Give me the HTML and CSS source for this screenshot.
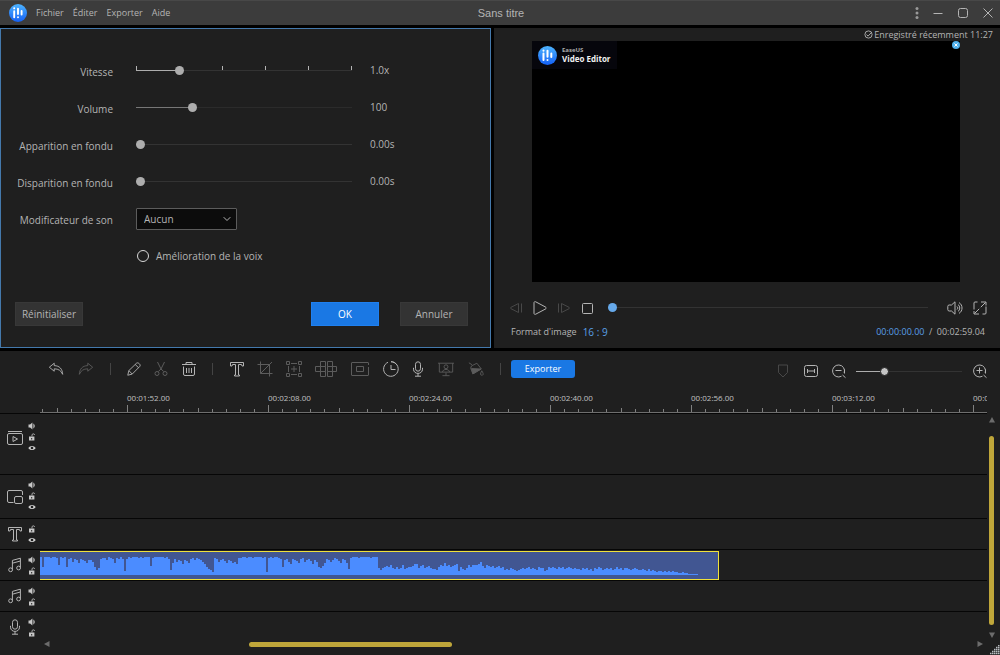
FILE: index.html
```html
<!DOCTYPE html>
<html lang="fr">
<head>
    <meta charset="UTF-8">
    <meta name="viewport" content="width=device-width, initial-scale=1.0">
    <title>Sans titre - Video Editor</title>
    <link rel="stylesheet" href="styles.css">
</head>
<body>
    <!-- Shared icons -->
    <svg class="sprite" aria-hidden="true">
        <defs>
            <linearGradient id="logo-fill" x1="0" y1="0" x2="0" y2="1">
                <stop offset="0" stop-color="#4db4ff"/>
                <stop offset="1" stop-color="#1460f5"/>
            </linearGradient>
        </defs>
        <symbol id="logo" viewBox="0 0 18 18">
            <circle cx="9" cy="9" r="9" fill="url(#logo-fill)"/>
            <g stroke="#fff" stroke-linecap="round" stroke-width="1.9">
                <path d="M5.2 7.200v6M9 4.600v5.500M12.600 7v3.500"/>
                <path d="M5.200 4.300v.1M9 13.200v.1"/>
            </g>
        </symbol>
        <symbol id="speaker" viewBox="0 0 8 8">
            <path d="M.5 2.6h1.6L4.4.6v6.8L2.1 5.4H.5z" fill="#c8c8c8"/>
            <path d="M5.4 2c1.6.6 1.6 3.4 0 4z" fill="#8c8c8c" stroke="#8c8c8c"/>
        </symbol>
        <symbol id="lock" viewBox="0 0 8 8">
            <path d="M1 3.5h5.4v4H1z" fill="#c8c8c8"/>
            <path d="M4 3.5V2c0-1.6 2.6-1.6 2.6 0" fill="none" stroke="#a8a8a8"/>
            <path d="M3.2 5h1v1.4h-1z" fill="#1f1f1f"/>
        </symbol>
        <symbol id="eye" viewBox="0 0 8 8">
            <path d="M.3 4C2 1.2 6 1.2 7.7 4 6 6.8 2 6.8.3 4z" fill="#d0d0d0"/>
            <circle cx="4" cy="4" r="1.3" fill="#1f1f1f"/>
        </symbol>
        <symbol id="note" viewBox="0 0 16 16">
            <path d="M5.4 12.6V3.4l8-2.2v9.2M5.4 6.2l8-2.2"/>
            <circle cx="3.6" cy="12.8" r="1.9"/>
            <circle cx="11.6" cy="11" r="1.9"/>
        </symbol>
        <symbol id="mic" viewBox="0 0 16 16">
            <rect x="5.5" y=".8" width="5" height="9.4" rx="2.5"/>
            <path d="M3.500 6.8v1.4c0 5.600 9 5.600 9 0V6.8M8 12.4v2.8M5 15.2h6"/>
        </symbol>
        <symbol id="text" viewBox="0 0 16 16">
            <path d="M1.500 1.500h13v3.500h-1.500l-.5-1.500H9.500v10.500h1v1h-5v-1h1V3.500H3.500L3 5H1.500z"/>
        </symbol>
    </svg>

    <header class="titlebar">
        <svg class="app-logo"><use href="#logo"/></svg>
        <nav class="menu">
            <a href="#">Fichier</a>
            <a href="#">Éditer</a>
            <a href="#">Exporter</a>
            <a href="#">Aide</a>
        </nav>
        <h1>Sans titre</h1>
        <div class="window-buttons">
            <button type="button" aria-label="Plus">
                <svg viewBox="0 0 4 12" class="dots"><circle cx="2" cy="1.600" r="1.500"/><circle cx="2" cy="6" r="1.500"/><circle cx="2" cy="10.400" r="1.500"/></svg>
            </button>
            <button type="button" aria-label="Réduire">
                <svg viewBox="0 0 12 12"><path d="M1.500 6.500h9"/></svg>
            </button>
            <button type="button" aria-label="Agrandir">
                <svg viewBox="0 0 12 12"><rect x="1.500" y="1.500" width="9" height="9" rx="2"/></svg>
            </button>
            <button type="button" aria-label="Fermer">
                <svg viewBox="0 0 12 12"><path d="M1.500 1.500l9 9M10.500 1.500l-9 9"/></svg>
            </button>
        </div>
    </header>

    <main class="workspace">
        <form class="settings" onsubmit="event.preventDefault();">
            <div class="fields">
                <label for="speed">Vitesse</label>
                <input type="range" id="speed" class="ticks" min="0" max="1000" value="188" style="--fill: 20%">
                <output for="speed">1.0x</output>

                <label for="volume">Volume</label>
                <input type="range" id="volume" class="dim" min="0" max="400" value="100" style="--fill: 26%">
                <output for="volume">100</output>

                <label for="fade-in">Apparition en fondu</label>
                <input type="range" id="fade-in" min="0" max="100" value="0" style="--fill: 0%">
                <output for="fade-in">0.00s</output>

                <label for="fade-out">Disparition en fondu</label>
                <input type="range" id="fade-out" min="0" max="100" value="0" style="--fill: 0%">
                <output for="fade-out">0.00s</output>

                <label for="voice">Modificateur de son</label>
                <div class="select-box">
                    <select id="voice">
                        <option>Aucun</option>
                    </select>
                    <svg viewBox="0 0 8 8"><path d="M.7 2.200L4 5.500l3.300-3.300"/></svg>
                </div>

                <label class="choice"><input type="radio" name="enhance">Amélioration de la voix</label>
            </div>
            <div class="form-buttons">
                <button type="reset">Réinitialiser</button>
                <button type="submit" class="primary">OK</button>
                <button type="button">Annuler</button>
            </div>
        </form>

        <section class="preview">
            <p class="saved">
                <svg viewBox="0 0 10 10"><circle cx="5" cy="5" r="4"/><path d="M2.800 5l1.700 1.800L8.400 2.600"/></svg>Enregistré récemment 11:27
            </p>
            <div class="screen">
                <div class="watermark">
                    <svg><use href="#logo"/></svg>
                    <p><small>EaseUS</small>Video Editor</p>
                </div>
                <button type="button" class="remove-mark" aria-label="Supprimer le filigrane">
                    <svg viewBox="0 0 8 8"><circle cx="4" cy="4" r="4"/><path d="M2.500 2.500l3 3M5.500 2.500l-3 3"/></svg>
                </button>
            </div>
            <div class="player">
                <button type="button" class="off" aria-label="Image précédente"><svg viewBox="0 0 14 14"><path d="M9.500 2.500v9L2 7.700c-.6-.4-.6-1 0-1.400zM12.500 2.500v9"/></svg></button>
                <button type="button" aria-label="Lecture"><svg viewBox="0 0 14 14"><path d="M1 1.800v10.400c0 1 .8 1.500 1.700 1L12.500 8c.9-.5.9-1.500 0-2L2.700.8C1.800.3 1 .8 1 1.800z"/></svg></button>
                <button type="button" class="off" aria-label="Image suivante"><svg viewBox="0 0 14 14"><path d="M4.500 2.500v9L12 7.700c.6-.4.6-1 0-1.400zM1.500 2.500v9"/></svg></button>
                <button type="button" aria-label="Arrêt"><svg viewBox="0 0 14 14"><rect x="1.500" y="2.500" width="10" height="10" rx="1"/></svg></button>
                <input type="range" class="seek" min="0" max="100" value="0" aria-label="Position">
                <button type="button" class="volume" aria-label="Son"><svg viewBox="0 0 16 14"><path d="M8 .8v12.400L4.500 10H2.200C1.300 10 .8 9.500.8 8.600V5.400C.8 4.500 1.300 4 2.200 4h2.300zM10 5.500c1 .8 1 2.200 0 3M11 3.600c2.300 1.500 2.300 5.300 0 6.800M12 1.600c4 2.300 4 8.500 0 10.800"/></svg></button>
                <button type="button" aria-label="Plein écran"><svg viewBox="0 0 14 14"><path d="M4.500 1H2Q1 1 1 2v6.500M9.500 13H12q1 0 1-1V5.500M8 1h5v3.500M12.500 1.500L7.800 6.200M6.200 7.800l-4.700 4.700M1 10v3h5"/></svg></button>
            </div>
            <div class="info">
                <span>Format d'image</span>
                <a href="#">16 : 9</a>
                <p class="time"><span>00:00:00.00</span>&ensp;/&ensp;00:02:59.04</p>
            </div>
        </section>
    </main>

    <section class="timeline">
        <div class="toolbar">
            <button type="button" class="large" aria-label="Annuler"><svg viewBox="0 0 18 18"><path d="M7 2.500L1.500 7 7 11.500V8.800c5 0 7.500 2 9.500 6.200C16.200 9 13 5.300 7 5.200z"/></svg></button>
            <button type="button" class="large off" aria-label="Rétablir"><svg viewBox="0 0 18 18"><path d="M11 2.500L16.500 7 11 11.500V8.800C6 8.800 3.500 10.800 1.500 15 1.800 9 5 5.300 11 5.200z"/></svg></button>
            <i class="bar"></i>
            <button type="button" class="small" aria-label="Modifier"><svg viewBox="0 0 18 18"><path d="M2 16l1.200-5.200 8.600-8.300c1.600-1.600 5.400 1.700 3.700 3.600L7 14.700zM10.400 4l3.700 3.500M3.200 10.800L7 14.700"/></svg></button>
            <button type="button" class="off" aria-label="Couper"><svg viewBox="0 0 16 16"><path d="M4.500 1L8 8l2.700 2.500M11.500 1L8 8l-2.700 2.500"/><circle cx="4" cy="12.500" r="2"/><circle cx="12" cy="12.500" r="2"/></svg></button>
            <button type="button" aria-label="Supprimer"><svg viewBox="0 0 16 16"><path d="M1 3.500h14M5 3.500v-2h6v2M2.500 5.500V13q0 1.500 1.500 1.500h8q1.500 0 1.500-1.500V5.500M5.500 7v5M8 7v5M10.500 7v5"/></svg></button>
            <i class="bar"></i>
            <button type="button" aria-label="Texte"><svg><use href="#text"/></svg></button>
            <button type="button" class="off" aria-label="Rogner"><svg viewBox="0 0 16 16"><path d="M.5 3.500h12v12M3.500.5v12h12M3.500 12.500L15 1"/></svg></button>
            <button type="button" class="large off" aria-label="Zoom"><svg viewBox="0 0 16 16"><path d="M.5.5h3v3h-3zM12.500.5h3v3h-3zM.5 12.500h3v3h-3zM12.500 12.500h3v3h-3zM5 2.500h6M5 13.500h6M2.500 5v6M13.500 5v6M8 5v6M5 8h6"/></svg></button>
            <button type="button" class="wide off" aria-label="Mosaïque"><svg viewBox="0 0 22 16"><path d="M5.500.5h5v5h-5zM12.500.5h5v5h-5zM.5 5.500h5v5h-5zM5.500 5.500h5v5h-5zM12.500 5.500h5v5h-5zM17.500 5.500h4v5h-4zM5.500 10.500h5v5h-5zM12.500 10.500h5v5h-5z"/></svg></button>
            <button type="button" class="wide off" aria-label="Figer l'image"><svg viewBox="0 0 20 16"><path d="M18.500 4V2q0-.5-.5-.5H2q-.5 0-.5.5v12q0 .5.500.5h16q.5 0 .5-.5V6M6.500 5.500h7v5h-7z"/></svg></button>
            <button type="button" aria-label="Durée"><svg viewBox="0 0 16 16"><path d="M5 1.300A7.300 7.300 0 1 0 8 .7c2.300 0 4.200 1 5.500 2.800M8 4v4.500h4.500"/></svg></button>
            <button type="button" class="small" aria-label="Voix off"><svg><use href="#mic"/></svg></button>
            <button type="button" class="large off" aria-label="Présentation"><svg viewBox="0 0 18 16"><path d="M0 1.500h18M1.500 1.500v10h15v-10M5 11.500c.5-4 7.500-4 8 0M5 15.500h8M9 12v3.500"/><circle cx="9" cy="5.500" r="2.200"/></svg></button>
            <button type="button" class="large off" aria-label="Couleur"><svg viewBox="0 0 18 18"><path d="M1 2l3.500 2.200M4 5.500l6-3 5 6.500-9.500 5.500L3 8z"/><path class="solid" d="M4 8.500l10.500.5-9 5.500z"/><path d="M15.500 11c2.500 3.800 1.700 5 0 5s-2-1.500 0-5z"/></svg></button>
            <i class="bar"></i>
            <button type="button" class="export">Exporter</button>
            <div class="zoom">
                <button type="button" class="off marker" aria-label="Marqueur"><svg viewBox="0 0 18 18"><path d="M4.500 3h9v7.500L9 15l-4.500-4.500z"/></svg></button>
                <button type="button" aria-label="Ajuster"><svg viewBox="0 0 18 18"><rect x="2.500" y="3.500" width="13" height="11" rx="2"/><path d="M5.500 7v4M12.500 7v4M6 9h6"/></svg></button>
                <button type="button" aria-label="Zoom arrière"><svg viewBox="0 0 18 18"><path d="M11.500 14.200A6 6 0 1 1 14.200 11M5.500 8.500h6M12.500 13l3 2.700M14.500 7.500v4"/></svg></button>
                <input type="range" class="zoom-level" min="0" max="100" value="25" aria-label="Zoom" style="--fill: 26%">
                <button type="button" aria-label="Zoom avant"><svg viewBox="0 0 18 18"><path d="M11.500 14.200A6 6 0 1 1 14.200 11M5.500 8.500h6M8.500 5.500v6M12.500 13l3 2.700M14.500 7.500v4"/></svg></button>
            </div>
        </div>

        <div class="ruler" id="ruler"></div>

        <div class="tracks-area">
            <div class="tracks">
                <div class="track video">
                    <svg class="track-icon" viewBox="0 0 16 16"><path d="M1 1.500h14"/><rect x=".5" y="3.500" width="15" height="11" rx="1.500"/><path d="M6 6.500v5L10.500 9z"/></svg>
                    <div class="switches"><svg><use href="#speaker"/></svg><svg><use href="#lock"/></svg><svg><use href="#eye"/></svg></div>
                </div>
                <div class="track overlay">
                    <svg class="track-icon" viewBox="0 0 16 16"><path d="M6.500 13.500H2Q.5 13.500.5 12V3Q.5 1.500 2 1.500h12q1.500 0 1.500 1.500V6"/><rect x="7.500" y="7.500" width="8" height="7" rx="1.500"/></svg>
                    <div class="switches"><svg><use href="#speaker"/></svg><svg><use href="#lock"/></svg><svg><use href="#eye"/></svg></div>
                </div>
                <div class="track">
                    <svg class="track-icon"><use href="#text"/></svg>
                    <div class="switches"><svg><use href="#lock"/></svg><svg><use href="#eye"/></svg></div>
                </div>
                <div class="track">
                    <svg class="track-icon"><use href="#note"/></svg>
                    <div class="switches"><svg><use href="#speaker"/></svg><svg><use href="#lock"/></svg></div>
                    <div class="lane"><div class="clip" id="clip"></div></div>
                </div>
                <div class="track">
                    <svg class="track-icon"><use href="#note"/></svg>
                    <div class="switches"><svg><use href="#speaker"/></svg><svg><use href="#lock"/></svg></div>
                </div>
                <div class="track last">
                    <svg class="track-icon"><use href="#mic"/></svg>
                    <div class="switches"><svg><use href="#speaker"/></svg><svg><use href="#lock"/></svg></div>
                    <div class="hscroll">
                        <svg class="arrow" viewBox="0 0 6 6"><path d="M5.500 0v6L0 3z"/></svg>
                        <div class="rail"><div class="thumb"></div></div>
                        <svg class="arrow" viewBox="0 0 6 6"><path d="M.5 0v6L6 3z"/></svg>
                    </div>
                </div>
            </div>
            <div class="vscroll">
                <svg class="arrow" viewBox="0 0 6 6"><path d="M0 5.500h6L3 0z"/></svg>
                <div class="thumb"></div>
                <svg class="arrow" viewBox="0 0 6 6"><path d="M0 .5h6L3 6z"/></svg>
                <svg class="grip" viewBox="0 0 10 10"><path d="M8 .5h2M6 2.500h4M4 4.500h6M2 6.500h8M0 8.500h10" stroke-width="1.500" stroke-dasharray="1.500 .5"/></svg>
            </div>
        </div>
    </section>
    <script src="script.js"></script>
</body>
</html>
```
FILE: styles.css
```css
* {
    box-sizing: border-box;
}

body {
    display: flex;
    flex-direction: column;
    min-height: 100vh;
    margin: 0;
    background: #000;
    color: #b4b4b4;
    font-family: "Open Sans", "Noto Sans", sans-serif;
    font-size: 10px;
    line-height: 14px;
}

h1, p {
    margin: 0;
}

a {
    color: inherit;
    text-decoration: none;
}

button, select {
    padding: 0;
    border: 0;
    background: none;
    color: inherit;
    font: inherit;
}

svg {
    display: block;
    fill: none;
    stroke: currentColor;
}

.sprite {
    position: absolute;
    width: 0;
    height: 0;
}

#logo, #speaker, #lock, #eye {
    stroke: none;
}

/* Title bar */
.titlebar {
    display: grid;
    grid-template-columns: 1fr auto 1fr;
    align-items: center;
    position: relative;
    height: 25px;
    padding: 0 6px 0 36px;
    background: #3c3c3c;
    border-top: 1px solid #484848;
}

.app-logo {
    position: absolute;
    left: 9px;
    top: 3px;
    width: 18px;
    height: 18px;
}

.menu {
    display: flex;
    gap: 9px;
    font-size: 9px;
}

.titlebar h1 {
    font-family: "Liberation Sans", sans-serif;
    font-size: 11px;
    font-weight: normal;
    padding-right: 28px;
}

.window-buttons {
    display: flex;
    justify-content: flex-end;
    gap: 13px;
}

.window-buttons svg {
    width: 12px;
    height: 12px;
}

.window-buttons .dots {
    width: 4px;
    fill: #9a9a9a;
    stroke: none;
}

/* Top panels */
.workspace {
    display: grid;
    grid-template-columns: 491fr 506fr;
    gap: 3px;
    padding: 3px 0;
}

.settings {
    padding: 23px 22px 21px 0;
    background: #1f1f1f;
    border: 1px solid #4479ac;
}

.fields {
    display: grid;
    grid-template-columns: 112px 216px auto;
    grid-auto-rows: 37px;
    column-gap: 23px;
    align-items: center;
}

.fields > label:not(.choice) {
    padding-top: 2px;
    text-align: right;
    white-space: nowrap;
}

output {
    margin-left: -5px;
    padding-bottom: 2px;
}

.fields .select-box, .fields .choice {
    grid-column: 2 / 4;
}

.choice {
    display: flex;
    align-items: center;
    gap: 7px;
}

.choice input {
    appearance: none;
    width: 12px;
    height: 12px;
    margin: 0 0 0 1px;
    border: 1px solid #d8d8d8;
    border-radius: 50%;
}

.select-box {
    position: relative;
    width: 101px;
}

.select-box select {
    appearance: none;
    display: block;
    width: 100%;
    height: 22px;
    padding: 0 7px;
    background: #0c0c0c;
    border: 1px solid #5c5c5c;
    border-radius: 1px;
}

.select-box svg {
    position: absolute;
    right: 6px;
    top: 7px;
    width: 8px;
    height: 8px;
}

/* Sliders */
input[type="range"] {
    --knob: #adadad;
    --line: #333;
    --done: #adadad;
    appearance: none;
    width: 100%;
    min-width: 0;
    height: 9px;
    margin: 0;
    background: none;
}

input[type="range"]::-webkit-slider-runnable-track {
    height: 9px;
    background: linear-gradient(90deg, var(--done) var(--fill, 0%), var(--line) var(--fill, 0%)) 0 4px / 100% 1px no-repeat;
}

input[type="range"]::-webkit-slider-thumb {
    appearance: none;
    width: 9px;
    height: 9px;
    background: var(--knob);
    border-radius: 50%;
}

input.ticks {
    background: repeating-linear-gradient(90deg, #b4b4b4 0 1px, transparent 1px 43px) 0 0 / 100% 5px no-repeat;
}

input[type="range"].dim {
    --done: #777;
    --line: #2b2b2b;
}

/* Form buttons */
.form-buttons {
    display: flex;
    gap: 21px;
    margin-top: 28px;
    padding-left: 14px;
}

.form-buttons button {
    width: 68px;
    height: 24px;
    background: #333;
    border: 1px solid #383838;
}

.form-buttons button:first-child {
    margin-right: auto;
}

.form-buttons .primary {
    background: #1a78e4;
    border-color: #1f80f0;
    color: #fff;
}

/* Preview */
.preview {
    background: #1f1f1f;
}

.saved {
    display: flex;
    justify-content: flex-end;
    align-items: center;
    gap: 1px;
    height: 13px;
    padding-right: 7px;
    font-size: 9px;
}

.saved svg {
    width: 9px;
    height: 9px;
}

.screen {
    position: relative;
    aspect-ratio: 16 / 9;
    margin: 0 40px 0 38px;
    background: #000;
}

.watermark {
    display: flex;
    align-items: center;
    gap: 5px;
    width: 85px;
    height: 28px;
    padding-left: 6px;
    background: #06060c;
    color: #f0f0f0;
    font-size: 8px;
    font-weight: bold;
    line-height: 10px;
    white-space: nowrap;
}

.watermark svg {
    flex: none;
    width: 19px;
    height: 19px;
}

.watermark small {
    display: block;
    color: #aaa;
    font-size: 6px;
    line-height: 8px;
}

.remove-mark {
    position: absolute;
    top: 0;
    right: 0;
}

.remove-mark svg {
    width: 8px;
    height: 8px;
    color: #fff;
}

.remove-mark circle {
    fill: #4fb0ec;
    stroke: none;
}

.player {
    display: flex;
    align-items: center;
    gap: 10px;
    height: 52px;
    padding: 0 13px 0 15px;
}

.player svg {
    width: 14px;
    height: 14px;
}

.player .volume svg {
    width: 16px;
}

.off {
    color: #5c5c5c;
}

.player .off {
    color: #484848;
}

input[type="range"].seek {
    --knob: #66a9ea;
    flex: 1;
    margin: 0 9px 0 3px;
}

.info {
    display: flex;
    gap: 6px;
    height: 14px;
    margin-top: -9px;
    padding: 0 15px 0 17px;
    font-size: 9px;
}

.info a, .time span {
    color: #5a9fe6;
}

.info a {
    font-size: 10px;
}

.time {
    margin-left: auto;
}

/* Timeline */
.timeline {
    display: flex;
    flex: 1;
    flex-direction: column;
    background: #1f1f1f;
}

.toolbar {
    display: flex;
    align-items: center;
    height: 36px;
    padding: 0 6px 0 41px;
}

.toolbar button:not(.export) {
    display: flex;
    flex: none;
    justify-content: center;
    width: 28px;
}

.toolbar button.small {
    width: 26px;
}

.toolbar button.large {
    width: 30px;
}

.toolbar button.wide {
    width: 34px;
}

.toolbar svg {
    width: 16px;
    height: 16px;
}

.toolbar .wide svg {
    width: 22px;
}

.toolbar .solid {
    fill: currentColor;
}

.bar {
    flex: none;
    width: 1px;
    height: 12px;
    margin: 0 10px 0 9px;
    background: #444;
}

.export {
    width: 64px;
    height: 18px;
    background: #1a78e4;
    border-radius: 3px;
    color: #fff;
    font-size: 9px;
}

.zoom {
    display: flex;
    align-items: center;
    margin-left: auto;
    padding-top: 4px;
}

.zoom svg {
    width: 18px;
    height: 18px;
}

.zoom .off {
    color: #484848;
}

input[type="range"].zoom-level {
    --knob: #c4c4c4;
    width: 106px;
    margin: 0 4px 0 3px;
}

.zoom-level::-webkit-slider-thumb {
    border: 1px solid #1f1f1f;
}

.ruler {
    height: 26px;
    margin: 0 13px 0 40px;
    overflow: hidden;
    border-bottom: 1px solid #6e6e6e;
    color: #c0c0c0;
}

.ruler text {
    fill: currentColor;
    stroke: none;
    font-size: 8px;
}

.ruler path {
    stroke: #808080;
}

.tracks-area {
    display: flex;
    flex: 1;
}

.tracks {
    display: flex;
    flex: 1;
    flex-direction: column;
    min-width: 0;
}

.track {
    display: flex;
    align-items: flex-start;
    height: 31px;
    padding: 6px 0 0 7px;
    border-top: 1px solid #060606;
}

.track.video {
    height: 61px;
    padding-top: 8px;
}

.track.overlay {
    height: 44px;
}

.track.last {
    flex: 1;
    min-height: 42px;
}

.track-icon {
    width: 16px;
    height: 16px;
    margin-top: 1px;
}

.video .track-icon, .overlay .track-icon {
    margin-top: 8px;
}

.switches {
    display: flex;
    flex-direction: column;
    gap: 3px;
    width: 17px;
    padding-left: 5px;
}

.switches svg {
    width: 8px;
    height: 8px;
}

.lane {
    flex: 1;
    margin-top: -5px;
    overflow: hidden;
}

.clip {
    width: 679px;
    height: 29px;
    background: #415692;
    border: 1px solid #f0e13c;
    border-left: 0;
}

.clip path {
    fill: #4b8cff;
    stroke: none;
}

/* Scrollbars */
.arrow {
    width: 6px;
    height: 6px;
    fill: #6c6c6c;
    stroke: none;
}

.hscroll {
    display: flex;
    flex: 1;
    align-items: center;
    align-self: flex-end;
    gap: 2px;
    padding: 0 4px 8px;
}

.hscroll .rail {
    flex: 1;
    padding-left: 21%;
}

.thumb {
    background: #bfa63a;
    border-radius: 3px;
}

.hscroll .thumb {
    width: 28%;
    height: 5px;
}

.vscroll {
    display: flex;
    flex-direction: column;
    align-items: center;
    width: 13px;
    padding: 4px 0 0;
}

.vscroll .arrow, .vscroll .thumb {
    margin-right: 4px;
}

.vscroll .thumb {
    flex: 1;
    width: 5px;
    margin-top: 13px;
    margin-bottom: 7px;
}

.grip {
    align-self: flex-end;
    width: 10px;
    height: 10px;
    margin-top: 7px;
    stroke: #b8bcc0;
}
```
FILE: script.js
```js
// Ruler: one label every 16 seconds, ten small steps between two labels
const times = ['00:01:52.00', '00:02:08.00', '00:02:24.00', '00:02:40.00', '00:02:56.00', '00:03:12.00', '00:03:28.00'];
const firstLabel = 87;
const step = 141;

function drawRuler() {
    let ticks = '';
    let labels = '';
    for (let i = -6; i < times.length * 10; i++) {
        const x = Math.round(firstLabel + i * step / 10) + 0.5;
        const size = i % 10 === 0 ? 7 : (i % 5 === 0 ? 4 : 3);
        ticks += `M${x} 25v-${size}`;
    }
    times.forEach((time, i) => {
        labels += `<text x="${firstLabel + i * step}" y="14">${time}</text>`;
    });
    document.getElementById('ruler').innerHTML = `<svg width="1080" height="25"><path d="${ticks}"/>${labels}</svg>`;
}

// Waveform: one level (base 36) every 2 pixels
const levels = [
    'i8iiihiihaihi8ghdgfcgfecffd857ghhfihgchgig4gihiiihihiii9hiiiiihig5c',
    'gdfebfecghfhgfdb8653hgdfgecfecdbhhiihiihiiiihi3hihiihg8',
    'fgdbgfecghdfgebfd879cgfdfhgecgfc6hiiihiiiiihiii7',
    '57898a76867a67889bb79a78976658a9c9a89ab48657a8aaabd97a989789785',
    '65765456767867658774587876878678767665767564768756767568675776567',
    '65565464543443434343322322111110'
].join('');

function drawWave() {
    let path = 'M0 23';
    [...levels].forEach((level, i) => {
        path += `V${23 - parseInt(level, 36)}H${i * 2 + 2}`;
    });
    document.getElementById('clip').innerHTML = `<svg width="678" height="27"><path d="${path}V23z"/></svg>`;
}

drawRuler();
drawWave();
```
